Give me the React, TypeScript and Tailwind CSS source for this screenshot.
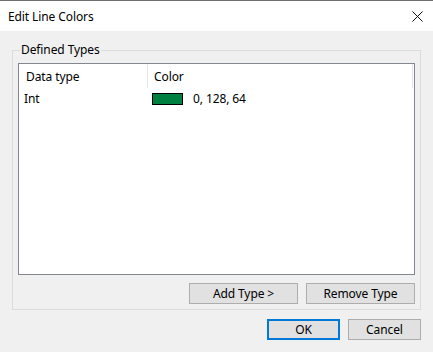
import React from "react";

const font = { fontFamily: '"Noto Sans", "Liberation Sans", sans-serif' };

const Btn = ({ label, primary, w }: { label: string; primary?: boolean; w: string }) => (
  <button
    className={`${w} h-[21px] bg-[#e1e1e1] text-[12px] leading-none text-black flex items-center justify-center ${
      primary ? "border-2 border-[#0078d7]" : "border border-[#adadad]"
    }`}
  >
    {label}
  </button>
);

const App = () => {
  return (
    <div className="w-[433px] h-[352px] bg-[#f0f0f0] flex flex-col text-[12px] text-black tracking-[-0.1px]" style={font}>
      {/* タイトルバー */}
      <div className="h-[31px] bg-white border-t border-[#6f6f6f] flex items-center justify-between pl-[8px] pr-[10px]">
        <span className="pt-[1px]">Edit Line Colors</span>
        <svg width="11" height="11" viewBox="0 0 11 11" className="mt-[1px]">
          <path d="M0.5 0.5 L10.5 10.5 M10.5 0.5 L0.5 10.5" stroke="#111" strokeWidth="1" />
        </svg>
      </div>

      {/* グループボックス */}
      <div className="relative ml-[12px] mt-[19px] w-[409px] h-[260px] border border-[#dcdcdc] flex flex-col pl-[5px] pt-[12px]">
        <span className="absolute left-[7px] top-[-9px] px-[1px] bg-[#f0f0f0] leading-[16px]">Defined Types</span>

        {/* リスト */}
        <div className="w-[397px] h-[212px] bg-white border border-[#828790] flex flex-col">
          <div className="h-[24px] flex items-stretch">
            <div className="w-[129px] pl-[7px] pt-[2px] flex items-center border-r border-[#e5e5e5]">Data type</div>
            <div className="flex-1 pl-[6px] pt-[2px] flex items-center border-r border-[#e5e5e5] mr-[1px]">Color</div>
          </div>
          <div className="h-[22px] flex items-center">
            <div className="w-[130px] pl-[5px]">Int</div>
            <div className="flex items-center pl-[3px]">
              <div className="w-[31px] h-[12px] bg-[#008040] border border-black" />
              <span className="ml-[10px]">0, 128, 64</span>
            </div>
          </div>
        </div>

        <div className="w-[397px] mt-[8px] flex justify-end gap-[8px]">
          <Btn label="Add Type >" w="w-[109px]" />
          <Btn label="Remove Type" w="w-[109px]" />
        </div>
      </div>

      <div className="w-[421px] mt-[9px] flex justify-end gap-[8px]">
        <Btn label="OK" primary w="w-[73px]" />
        <Btn label="Cancel" w="w-[73px]" />
      </div>
    </div>
  );
};

export default App;
